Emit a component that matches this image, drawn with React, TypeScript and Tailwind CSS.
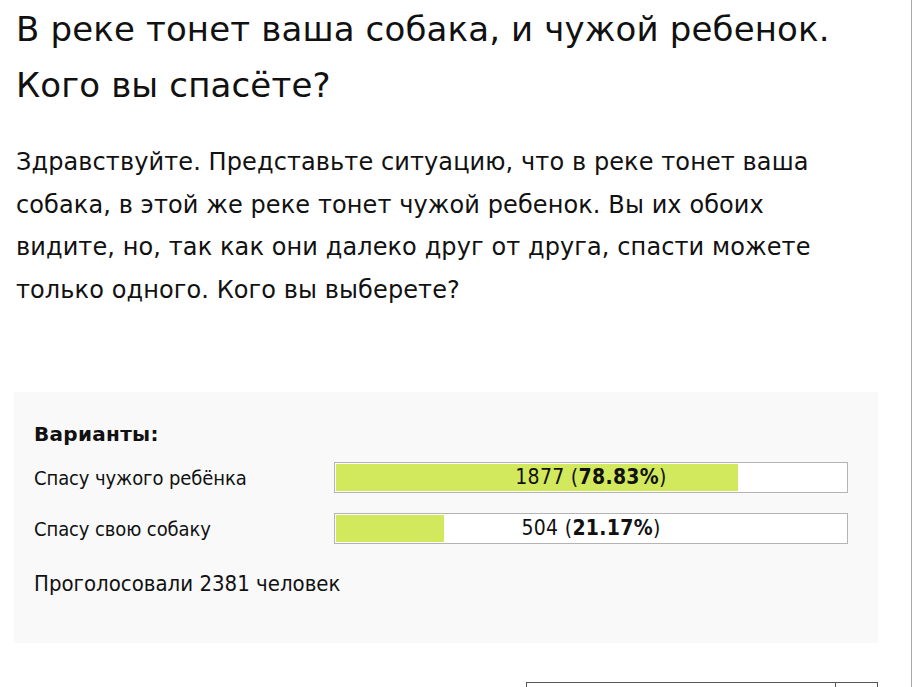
import React from "react";

const options = [
  { label: "Спасу чужого ребёнка", votes: 1877, pct: 78.83 },
  { label: "Спасу свою собаку", votes: 504, pct: 21.17 },
];

export default function App() {
  return (
    <div className="w-[912px] h-[687px] overflow-hidden border-r border-[#a8a8a8] bg-white text-[#111] [font-family:'DejaVu_Sans',Tahoma,sans-serif]">
      <h1 className="pl-4 pt-[1px] text-[34px] leading-[56px] tracking-[0.15px] font-normal whitespace-nowrap">
        В реке тонет ваша собака, и чужой ребенок.
        <br />
        Кого вы спасёте?
      </h1>
      <p className="mt-[28px] pl-4 text-[24px] leading-[42.5px] tracking-[0.1px] whitespace-nowrap">
        Здравствуйте. Представьте ситуацию, что в реке тонет ваша
        <br />
        собака, в этой же реке тонет чужой ребенок. Вы их обоих
        <br />
        видите, но, так как они далеко друг от друга, спасти можете
        <br />
        только одного. Кого вы выберете?
      </p>
      <div className="mt-[81px] ml-[14px] w-[864px] h-[251px] bg-[#f9f9f9] pl-5 pt-[28px] [font-family:'DejaVu_Sans_Condensed','DejaVu_Sans',sans-serif] [font-stretch:condensed]">
        <div className="text-[20px] font-bold leading-[28px] tracking-[0.3px] [font-family:'DejaVu_Sans',sans-serif] [font-stretch:normal]">
          Варианты:
        </div>
        <div className="mt-[14px] flex flex-col gap-[20px]">
          {options.map((o) => (
            <div key={o.label} className="flex items-center h-[31px]">
              <div className="w-[300px] text-[20px] tracking-[-0.1px] whitespace-nowrap">{o.label}</div>
              <div className="relative w-[514px] h-[31px] border border-[#b4b4b4] bg-white p-[1px]">
                <div className="h-full bg-[#d3e95d]" style={{ width: `${o.pct}%` }} />
                <div className="absolute inset-0 flex items-center justify-center text-[21px] tracking-[0.3px]">
                  <span>
                    {o.votes} (<b>{o.pct.toFixed(2)}%</b>)
                  </span>
                </div>
              </div>
            </div>
          ))}
        </div>
        <div className="mt-[23px] text-[22px] tracking-[0px] whitespace-nowrap">Проголосовали 2381 человек</div>
      </div>
      <div className="mt-[39px] ml-[526px] w-[352px] h-[20px] border border-[#555] flex">
        <div className="flex-1" />
        <div className="w-[42px] border-l border-[#555]" />
      </div>
    </div>
  );
}
